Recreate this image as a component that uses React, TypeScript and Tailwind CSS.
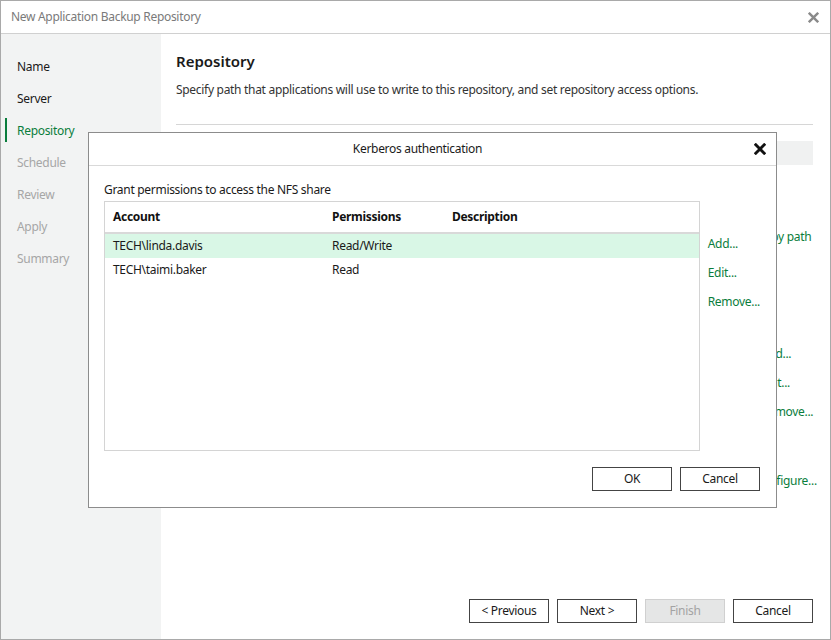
import React from "react";

const font = { fontFamily: '"Noto Sans", "Open Sans", sans-serif' };

function XIcon({ size, color, stroke }: { size: number; color: string; stroke: number }) {
  return (
    <svg width={size} height={size} viewBox="0 0 10 10">
      <path d="M1.5 1.5 L8.5 8.5 M8.5 1.5 L1.5 8.5" stroke={color} strokeWidth={stroke} strokeLinecap="square" />
    </svg>
  );
}

const navItems = [
  { label: "Name", state: "done" },
  { label: "Server", state: "done" },
  { label: "Repository", state: "active" },
  { label: "Schedule", state: "off" },
  { label: "Review", state: "off" },
  { label: "Apply", state: "off" },
  { label: "Summary", state: "off" },
];

function Btn({ children, disabled }: { children: React.ReactNode; disabled?: boolean }) {
  return (
    <div
      className={
        "w-[80px] h-[24px] flex items-center justify-center text-[12px] border " +
        (disabled ? "bg-[#e5e6e6] border-[#d0d0d0] text-[#a3a3a3]" : "bg-white border-[#444444] text-[#1a1a1a]")
      }
    >
      {children}
    </div>
  );
}

export default function App() {
  return (
    <div style={font} className="relative w-[831px] h-[640px] bg-white border border-[#a9a9a9] flex flex-col overflow-hidden tracking-[-0.3px]">
      {/* title bar */}
      <div className="h-[33px] shrink-0 flex items-center justify-between pl-[10px] pr-[11px] border-b border-[#d0d0d0]">
        <span className="text-[12px] text-[#7a7a7a]">New Application Backup Repository</span>
        <XIcon size={11} color="#8a8a8a" stroke={2.2} />
      </div>
      <div className="flex flex-1 min-h-0">
        {/* nav */}
        <div className="w-[160px] shrink-0 bg-[#f2f3f3] pt-[17px]">
          {navItems.map((it) => (
            <div key={it.label} className="relative h-[32px] flex items-center pl-[16px] text-[12px]">
              {it.state === "active" && <div className="absolute left-[4px] top-[3px] w-[2px] h-[24px] bg-[#0a7d3c]" />}
              <span
                className={
                  it.state === "active" ? "text-[#0a7d3c]" : it.state === "done" ? "text-[#1a1a1a]" : "text-[#a6a6a6]"
                }
              >
                {it.label}
              </span>
            </div>
          ))}
        </div>
        {/* main */}
        <div className="flex-1 flex flex-col pl-[15px] pr-[17px]">
          <div className="pt-[17px] text-[15px] leading-[20px] font-semibold text-[#1a1a1a] tracking-normal">Repository</div>
          <div className="mt-[11px] text-[12px] leading-[16px] text-[#333333]">
            Specify path that applications will use to write to this repository, and set repository access options.
          </div>
          <div className="mt-[26px] border-t border-[#d6d6d6]" />
          <div className="mt-[16px] h-[24px] bg-[#f0f1f1]" />
          <div className="flex justify-end">
            <div className="w-[52px] flex flex-col text-[12px] leading-[16px] text-[#0a7d3c]">
              <span className="mt-[64px] -ml-[4px] whitespace-nowrap">Copy path</span>
              <span className="mt-[101px]">Add...</span>
              <span className="mt-[13px]">Edit...</span>
              <span className="mt-[13px]">Remove...</span>
              <span className="mt-[53px] -ml-[6px]">Configure...</span>
            </div>
          </div>
          <div className="flex-1" />
          <div className="flex justify-end gap-[8px] pb-[16px]">
            <Btn>&lt; Previous</Btn>
            <Btn>Next &gt;</Btn>
            <Btn disabled>Finish</Btn>
            <Btn>Cancel</Btn>
          </div>
        </div>
      </div>

      {/* dialog */}
      <div className="absolute left-[87px] top-[131px] w-[689px] h-[376px] bg-white border border-[#8c8c8c] flex flex-col">
        <div className="relative h-[33px] shrink-0 flex items-center justify-center border-b border-[#d9d9d9] pr-[30px]">
          <span className="text-[12px] text-[#1a1a1a]">Kerberos authentication</span>
          <div className="absolute right-[10px] top-[10px]">
            <XIcon size={12} color="#111111" stroke={2.4} />
          </div>
        </div>
        <div className="pl-[15px] pr-[16px] flex flex-col flex-1">
          <div className="mt-[16px] text-[12px] leading-[16px] text-[#1a1a1a]">Grant permissions to access the NFS share</div>
          <div className="mt-[3px] flex">
            <div className="w-[596px] h-[250px] border border-[#d4d4d4] flex flex-col">
              <div className="h-[32px] shrink-0 flex items-center text-[12px] font-bold text-[#111111] border-b-2 border-[#d9d9d9]">
                <span className="w-[227px] pl-[8px]">Account</span>
                <span className="w-[120px]">Permissions</span>
                <span>Description</span>
              </div>
              <div className="h-[24px] flex items-center text-[12px] text-[#1a1a1a] bg-[#d9f7e6]">
                <span className="w-[227px] pl-[8px]">TECH\linda.davis</span>
                <span>Read/Write</span>
              </div>
              <div className="h-[24px] flex items-center text-[12px] text-[#1a1a1a]">
                <span className="w-[227px] pl-[8px]">TECH\taimi.baker</span>
                <span>Read</span>
              </div>
            </div>
            <div className="ml-[8px] flex flex-col text-[12px] leading-[16px] text-[#0a7d3c]">
              <span className="mt-[35px]">Add...</span>
              <span className="mt-[13px]">Edit...</span>
              <span className="mt-[13px]">Remove...</span>
            </div>
          </div>
          <div className="mt-[16px] flex justify-end gap-[8px]">
            <Btn>OK</Btn>
            <Btn>Cancel</Btn>
          </div>
        </div>
      </div>
    </div>
  );
}
